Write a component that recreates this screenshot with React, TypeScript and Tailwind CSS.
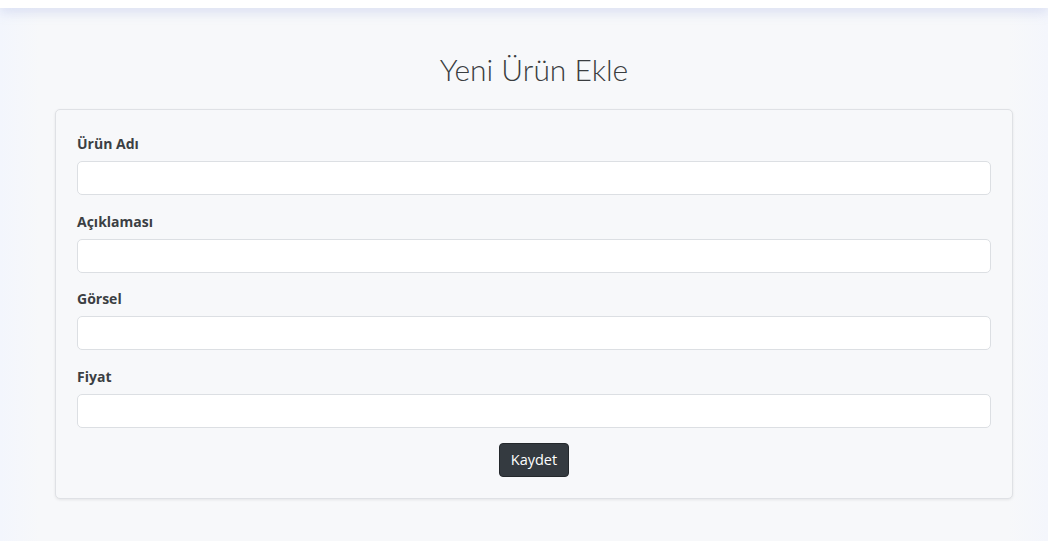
import React from "react";

const fields = ["Ürün Adı", "Açıklaması", "Görsel", "Fiyat"];

export default function App() {
  return (
    <div className="min-h-[541px] bg-[linear-gradient(90deg,#f3f6fd_0px,#f7f8fa_40px,#f7f8fa_1008px,#f4f6fc_1048px)] font-['Open_Sans',sans-serif]">
      <div className="h-[8px] bg-white shadow-[0_3px_12px_rgba(170,182,230,0.5)] relative z-10" />
      <div className="pb-[43px]">
        <div className="ml-[55px] mr-[35px]">
          <h1 className="text-center font-['Lato',sans-serif] font-light text-[30px] text-[#3a3d40] pt-[41px] pb-[20px] leading-[40px]">
            Yeni Ürün Ekle
          </h1>
          <div className="bg-[#f7f8fa] border border-[#dfe1e5] rounded-[5px] shadow-[0_1px_3px_rgba(0,0,0,0.08)] px-[21px] pt-[23px] pb-[21px]">
            {fields.map((f) => (
              <div key={f} className="mb-[15.5px]">
                <label className="block text-[14px] font-bold text-[#3b3f43] leading-[21px] mb-[7px]">{f}</label>
                <div className="h-[34px] bg-white border border-[#dcdfe3] rounded-[5px]" />
              </div>
            ))}
            <div className="flex justify-center">
              <button className="h-[34px] w-[70px] bg-[#343a40] text-white text-[14.5px] rounded-[4px] border border-[#24282c]">
                Kaydet
              </button>
            </div>
          </div>
        </div>
      </div>
    </div>
  );
}
